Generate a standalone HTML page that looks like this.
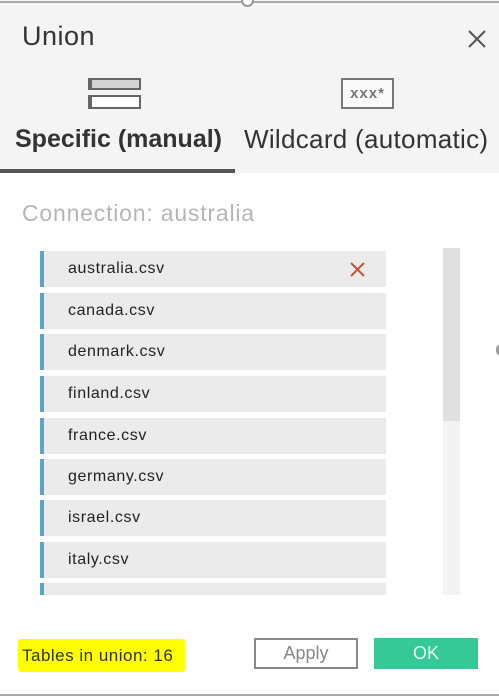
<!DOCTYPE html>
<html><head><style>
*{margin:0;padding:0;box-sizing:border-box}
body{width:499px;height:696px;background:#fff;position:relative;overflow:hidden;font-family:"Liberation Sans",sans-serif}
.a{position:absolute}
.hdr{left:0;top:0;width:499px;height:173px;background:#f4f4f4}
.item{position:absolute;left:40px;width:346px;height:36px;background:#ebebeb;border-left:4px solid #5da3c5;font-size:16px;letter-spacing:0.6px;color:#222;padding-left:24px;line-height:36px}
</style></head><body>
<div class="a hdr"></div>
<div class="a" style="left:0;top:1px;width:499px;height:2px;background:#aaa"></div>
<div class="a" style="left:241px;top:-6px;width:13px;height:13px;border:2px solid #999;border-radius:50%;background:#fff"></div>
<div class="a" style="left:22px;top:21px;font-size:27px;letter-spacing:0.5px;color:#333">Union</div>
<svg class="a" style="left:467px;top:29px" width="20" height="20"><path d="M2 2L18 18M18 2L2 18" stroke="#555" stroke-width="2"/></svg>
<div class="a" style="left:88px;top:78px;width:53px;height:12px;background:#d2d2d2;border:2px solid #666;border-left-width:4px"></div>
<div class="a" style="left:88px;top:95px;width:53px;height:14px;background:#fff;border:2px solid #666;border-left-width:4px"></div>
<div class="a" style="left:341px;top:78px;width:53px;height:31px;border:2px solid #777;background:#fafafa;font-size:15px;color:#777;font-weight:bold;text-align:center;line-height:27px;letter-spacing:1px">xxx*</div>
<div class="a" style="left:15px;top:125px;font-size:25px;font-weight:bold;color:#333">Specific (manual)</div>
<div class="a" style="left:244px;top:124px;font-size:26px;letter-spacing:0.3px;color:#333">Wildcard (automatic)</div>
<div class="a" style="left:0;top:169px;width:235px;height:4px;background:#555"></div>
<div class="a" style="left:22px;top:200px;font-size:23px;letter-spacing:0.8px;color:#b5b5b5">Connection: australia</div>
<div class="item" style="top:251px">australia.csv<svg class="a" style="left:306px;top:11px" width="15" height="15"><path d="M1 1L14 14M14 1L1 14" stroke="#c0593a" stroke-width="2"/></svg></div>
<div class="item" style="top:293px">canada.csv</div>
<div class="item" style="top:334px">denmark.csv</div>
<div class="item" style="top:376px">finland.csv</div>
<div class="item" style="top:418px">france.csv</div>
<div class="item" style="top:459px">germany.csv</div>
<div class="item" style="top:500px">israel.csv</div>
<div class="item" style="top:542px">italy.csv</div>
<div class="item" style="top:583px;height:12px"></div>
<div class="a" style="left:443px;top:248px;width:17px;height:347px;background:#f3f3f3"></div>
<div class="a" style="left:443px;top:248px;width:17px;height:173px;background:#e0e0e0"></div>
<div class="a" style="left:18px;top:639px;width:167px;height:33px;background:#ffff00;border-radius:3px"></div>
<div class="a" style="left:22px;top:646px;font-size:17px;letter-spacing:0.5px;color:#333">Tables in union: 16</div>
<div class="a" style="left:254px;top:638px;width:104px;height:31px;border:2px solid #888;background:#fff;font-size:18px;color:#888;text-align:center;line-height:27px">Apply</div>
<div class="a" style="left:374px;top:638px;width:104px;height:31px;background:#35c998;font-size:18px;color:#e8fff5;text-align:center;line-height:31px">OK</div>
<div class="a" style="left:0;top:694px;width:499px;height:2px;background:#aaa"></div>
<div class="a" style="left:496px;top:345px;width:5px;height:10px;border-radius:50%;background:#999"></div>
</body></html>
